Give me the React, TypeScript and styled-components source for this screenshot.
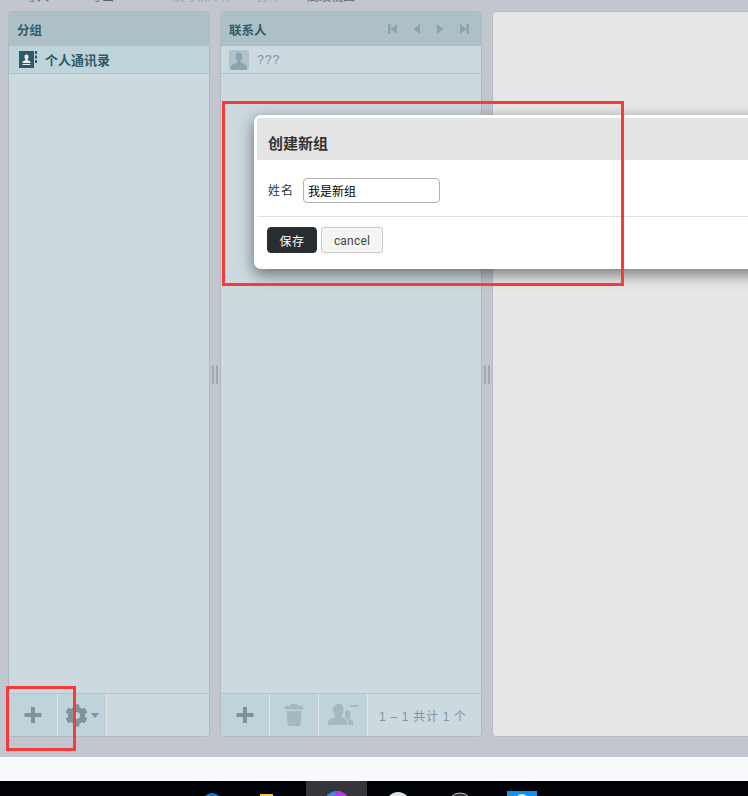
import { FC, ReactNode } from "react";
import styled, { createGlobalStyle } from "styled-components";
import { FaCog } from "react-icons/fa";

const cjk = `"Liberation Sans", "Noto Sans CJK SC", sans-serif`;

const GlobalStyle = createGlobalStyle`
    html, body {
        margin: 0;
        padding: 0;
        height: 796px;
        overflow: hidden;
        font-family: ${cjk};
    }
`;

const Page = styled.div`
    position: relative;
    width: 748px;
    height: 796px;
    overflow: hidden;
    display: flex;
    flex-direction: column;
`;

const Workspace = styled.div`
    height: 757px;
    background: #c2c6ce;
    padding-left: 8px;
    box-sizing: border-box;
    overflow: hidden;
`;

const TopMenu = styled.div`
    height: 11px;
    overflow: hidden;
    display: flex;
    align-items: flex-end;
    line-height: 16px;
`;

const TopMenuItem = styled.span<{ $left: number; $muted?: boolean }>`
    margin-left: ${(p) => p.$left}px;
    padding-bottom: 6px;
    white-space: nowrap;
    font-size: 12px;
    color: ${(p) => (p.$muted ? "#9a9fa6" : "#5f656b")};
`;

const Panels = styled.div`
    display: flex;
    height: 726px;
    width: 800px;
`;

const Panel = styled.section<{ $width: number }>`
    width: ${(p) => p.$width}px;
    box-sizing: border-box;
    display: flex;
    flex-direction: column;
    background: #ccd9df;
    border: 1px solid #b0b9be;
    border-radius: 4px;
    overflow: hidden;
`;

const PanelHeader = styled.header`
    height: 34px;
    flex: none;
    box-sizing: border-box;
    padding: 0 8px;
    display: flex;
    align-items: center;
    justify-content: space-between;
    background: #adc0c6;
`;

const PanelTitle = styled.h2`
    margin: 0;
    font-size: 12.5px;
    font-weight: 700;
    color: #2f5b68;
`;

const Pager = styled.div`
    display: flex;
    gap: 15px;
    padding-right: 4px;
`;

const ListRow = styled.div<{ $active?: boolean }>`
    height: 28px;
    flex: none;
    box-sizing: border-box;
    display: flex;
    align-items: center;
    padding-left: ${(p) => (p.$active ? 10 : 8)}px;
    background: ${(p) => (p.$active ? "#bfd3da" : "#ccd9df")};
    border-bottom: 1px solid #b2c1c6;
`;

const GroupName = styled.span`
    margin-left: 8px;
    font-size: 13px;
    font-weight: 700;
    color: #2f5b68;
`;

const ContactName = styled.span`
    margin-left: 8px;
    font-size: 12.5px;
    letter-spacing: 0.8px;
    color: #7f929e;
`;

const PanelBody = styled.div`
    flex: 1;
`;

const PanelFooter = styled.footer`
    height: 42px;
    flex: none;
    display: flex;
    align-items: stretch;
    border-top: 1px solid #b5c3c8;
`;

const ToolButton = styled.div`
    width: 49px;
    box-sizing: border-box;
    display: flex;
    align-items: center;
    justify-content: center;
    gap: 3px;
    background: #bfd3da;
    border-right: 1px solid #e1e7e9;
`;

const PageCount = styled.span`
    align-self: center;
    margin-left: 11px;
    font-size: 12px;
    letter-spacing: 0.7px;
    color: #7f959e;
    white-space: nowrap;
`;

const Splitter = styled.div`
    width: 10px;
    flex: none;
    display: flex;
    align-items: center;
    justify-content: center;
    gap: 2px;
`;

const Grip = styled.i`
    width: 2px;
    height: 19px;
    background: #a3a9ae;
`;

const BlankPanel = styled.section`
    width: 300px;
    box-sizing: border-box;
    background: #e6e6e6;
    border: 1px solid #b9bdc2;
    border-radius: 4px;
`;

const Strip = styled.div`
    height: 24px;
    background: #f8f9fa;
`;

const Taskbar = styled.div`
    height: 15px;
    background: #010208;
    display: flex;
    align-items: flex-start;
    overflow: hidden;
    padding-left: 200px;
`;

const TaskTile = styled.div<{ $width: number; $left: number; $active?: boolean }>`
    width: ${(p) => p.$width}px;
    margin-left: ${(p) => p.$left}px;
    height: 15px;
    flex: none;
    display: flex;
    justify-content: center;
    background: ${(p) => (p.$active ? "#35363b" : "transparent")};
`;

const Dialog = styled.div`
    position: absolute;
    left: 254px;
    top: 115px;
    width: 640px;
    box-sizing: border-box;
    background: #fff;
    border: 3px solid #fff;
    border-radius: 7px;
    box-shadow: 0 5px 15px rgba(0, 0, 0, 0.5);
`;

const DialogHead = styled.div`
    height: 42px;
    box-sizing: border-box;
    padding: 15px 0 0 11px;
    background: #e4e4e4;
    font-size: 15px;
    line-height: 21px;
    font-weight: 700;
    color: #333;
`;

const DialogBody = styled.div`
    height: 57px;
    box-sizing: border-box;
    padding: 18px 0 0 11px;
    display: flex;
    align-items: flex-start;
    border-bottom: 1px solid #e0e0e0;
`;

const FieldLabel = styled.label`
    width: 35px;
    flex: none;
    font-size: 12px;
    line-height: 26px;
    letter-spacing: 1px;
    color: #333;
`;

const NameInput = styled.input`
    width: 137px;
    height: 25px;
    box-sizing: border-box;
    padding: 0 4px;
    border: 1px solid #b0b0b0;
    border-radius: 4px;
    background: #fff;
    font: 12px ${cjk};
    color: #000;
`;

const DialogFoot = styled.div`
    height: 49px;
    box-sizing: border-box;
    padding: 10px 0 0 10px;
    display: flex;
    align-items: flex-start;
    gap: 4px;
`;

const PrimaryButton = styled.button`
    width: 50px;
    height: 26px;
    padding: 0;
    border: 1px solid #292b2f;
    border-radius: 4px;
    background: #2a2d32;
    color: #fff;
    font: 12px ${cjk};
    letter-spacing: 0.5px;
`;

const PlainButton = styled.button`
    width: 62px;
    height: 26px;
    padding: 1px 0 0;
    border: 1px solid #ccc;
    border-radius: 3px;
    background: #f5f5f5;
    color: #444;
    font: 12px Roboto, "Liberation Sans", sans-serif;
    letter-spacing: 0.2px;
`;

const Annotation = styled.div<{ $x: number; $y: number; $w: number; $h: number }>`
    position: absolute;
    left: ${(p) => p.$x}px;
    top: ${(p) => p.$y}px;
    width: ${(p) => p.$w}px;
    height: ${(p) => p.$h}px;
    box-sizing: border-box;
    border: 3px solid #f83a3a;
    pointer-events: none;
`;

const PlusIcon: FC = () => (
    <svg width="18" height="18" viewBox="0 0 18 18">
        <path d="M7 1h4v6h6.500v4H11v6H7v-6H.5V7H7z" fill="#7b949e" />
    </svg>
);

const GearIcon = styled(FaCog)`
    width: 23px;
    height: 23px;
    color: #7b949e;
`;

const Caret: FC = () => (
    <svg width="8" height="5" viewBox="0 0 8 5">
        <path d="M0 0h8L4 5z" fill="#7b949e" />
    </svg>
);

const TrashIcon: FC = () => (
    <svg width="18" height="22" viewBox="0 0 18 22">
        <path
            d="M6 0h6l1 2h4a1 1 0 0 1 1 1v2.500H0V3a1 1 0 0 1 1-1h4zM1.500 7h15l-1 14a1 1 0 0 1-1 1H3.500a1 1 0 0 1-1-1z"
            fill="#a5b9bf"
        />
    </svg>
);

const PeopleIcon: FC = () => (
    <svg width="30" height="22" viewBox="0 0 30 22">
        <path
            d="M11 0c3 0 4.500 2 4.500 5s-1 6-2.500 7.500c3 1.500 5 2.500 6 4.500v4H0v-3c1-2.500 5-4 7.500-5.500C6 11 5 8 5 5c0-3 3-5 6-5z"
            fill="#a5b9bf"
        />
        <path
            d="M19 6c2 0 3.500 1.500 3.500 4s-.5 3.500-1.500 4.500c1.500 1 4 1.500 4 3.500v3h-5v-4c-.5-1.500-2-3-3-3.500.5-1 0-3 0-4 0-2 .5-3.500 2-3.500z"
            fill="#a5b9bf"
        />
        <rect x="22" y="1" width="8" height="2" fill="#a5b9bf" />
    </svg>
);

const PagerIcon: FC<{ dir: "first" | "prev" | "next" | "last" }> = ({ dir }) => {
    const paths = {
        first: "M0 0h2.500v10H0zM9 0v10L2.500 5z",
        prev: "M8 0v10L1.500 5z",
        next: "M1 0v10l6.500-5z",
        last: "M0 0v10l6.500-5zM6.500 0H9v10H6.500z",
    };
    return (
        <svg width="9" height="10" viewBox="0 0 9 10">
            <path d={paths[dir]} fill="#8ca4ad" />
        </svg>
    );
};

const AddressBookIcon: FC = () => (
    <svg width="18" height="17" viewBox="0 0 18 17">
        <rect width="15" height="17" fill="#2f5b68" />
        <path d="M16 0h2v3h-2zM16 4.500h2v3h-2zM16 9h2v3h-2z" fill="#2f5b68" />
        <path
            d="M7.500 3.500c1.300 0 2 .9 2 2.200 0 1-.4 1.900-.9 2.500v1.100c1 .4 2.900.8 2.900 2V12h-8v-.7c0-1.200 1.900-1.600 2.900-2V8.200c-.5-.6-.9-1.500-.9-2.500 0-1.300.7-2.200 2-2.200zM3.500 13h8v1h-8z"
            fill="#e9f0f2"
        />
    </svg>
);

const AvatarIcon: FC = () => (
    <svg width="20" height="20" viewBox="0 0 20 20">
        <rect width="20" height="20" rx="2" fill="#afc3ca" />
        <path
            d="M10 2.500c2.200 0 3.300 1.600 3.300 3.800 0 1.800-.6 3.400-1.400 4.400v2c1.800.8 5.600 1.500 6.100 4.300V20H2v-3c.5-2.800 4.300-3.500 6.100-4.300v-2c-.8-1-1.400-2.600-1.400-4.400 0-2.200 1.100-3.800 3.300-3.800z"
            fill="#8aa5af"
        />
    </svg>
);

const TaskGlyph: FC<{ size: number; children: ReactNode }> = ({ size, children }) => (
    <svg width={size} height="15" viewBox={`0 0 ${size} 15`}>
        {children}
    </svg>
);

export default function App() {
    return (
        <Page>
            <GlobalStyle />
            <Workspace>
                <TopMenu>
                    <TopMenuItem $left={17}>导入</TopMenuItem>
                    <TopMenuItem $left={41}>导出</TopMenuItem>
                    <TopMenuItem $left={58} $muted>
                        撰写新邮件
                    </TopMenuItem>
                    <TopMenuItem $left={25} $muted>
                        打印
                    </TopMenuItem>
                    <TopMenuItem $left={26}>高级视图</TopMenuItem>
                </TopMenu>
                <Panels>
                    <Panel $width={202}>
                        <PanelHeader>
                            <PanelTitle>分组</PanelTitle>
                        </PanelHeader>
                        <ListRow $active>
                            <AddressBookIcon />
                            <GroupName>个人通讯录</GroupName>
                        </ListRow>
                        <PanelBody />
                        <PanelFooter>
                            <ToolButton>
                                <PlusIcon />
                            </ToolButton>
                            <ToolButton>
                                <GearIcon />
                                <Caret />
                            </ToolButton>
                        </PanelFooter>
                    </Panel>
                    <Splitter>
                        <Grip />
                        <Grip />
                    </Splitter>
                    <Panel $width={262}>
                        <PanelHeader>
                            <PanelTitle>联系人</PanelTitle>
                            <Pager>
                                <PagerIcon dir="first" />
                                <PagerIcon dir="prev" />
                                <PagerIcon dir="next" />
                                <PagerIcon dir="last" />
                            </Pager>
                        </PanelHeader>
                        <ListRow>
                            <AvatarIcon />
                            <ContactName>???</ContactName>
                        </ListRow>
                        <PanelBody />
                        <PanelFooter>
                            <ToolButton>
                                <PlusIcon />
                            </ToolButton>
                            <ToolButton>
                                <TrashIcon />
                            </ToolButton>
                            <ToolButton>
                                <PeopleIcon />
                            </ToolButton>
                            <PageCount>1 – 1 共计 1 个</PageCount>
                        </PanelFooter>
                    </Panel>
                    <Splitter>
                        <Grip />
                        <Grip />
                    </Splitter>
                    <BlankPanel />
                </Panels>
            </Workspace>
            <Strip />
            <Taskbar>
                <TaskTile $width={24} $left={0}>
                    <TaskGlyph size={24}>
                        <circle cx="12" cy="22" r="10" fill="#1177d4" />
                    </TaskGlyph>
                </TaskTile>
                <TaskTile $width={16} $left={35}>
                    <TaskGlyph size={16}>
                        <rect x="1" y="13" width="13" height="2" fill="#f5c842" />
                    </TaskGlyph>
                </TaskTile>
                <TaskTile $width={61} $left={31} $active>
                    <TaskGlyph size={26}>
                        <circle cx="13" cy="23" r="13" fill="#3f8ae8" />
                        <path d="M13 23 11 10a13 13 0 0 1 14 10z" fill="#b63ae8" />
                    </TaskGlyph>
                </TaskTile>
                <TaskTile $width={26} $left={18}>
                    <TaskGlyph size={26}>
                        <circle cx="13" cy="23" r="12" fill="#dfe4ea" />
                        <circle cx="13" cy="24" r="8" fill="#8a95a8" />
                    </TaskGlyph>
                </TaskTile>
                <TaskTile $width={26} $left={36}>
                    <TaskGlyph size={26}>
                        <circle cx="13" cy="24" r="12" fill="#33343a" stroke="#c9ccd2" />
                    </TaskGlyph>
                </TaskTile>
                <TaskTile $width={30} $left={34}>
                    <TaskGlyph size={30}>
                        <rect y="10" width="30" height="5" fill="#1190ee" />
                        <circle cx="15" cy="20" r="7" fill="#d8eefc" />
                    </TaskGlyph>
                </TaskTile>
            </Taskbar>
            <Dialog>
                <DialogHead>创建新组</DialogHead>
                <DialogBody>
                    <FieldLabel>姓名</FieldLabel>
                    <NameInput defaultValue="我是新组" />
                </DialogBody>
                <DialogFoot>
                    <PrimaryButton>保存</PrimaryButton>
                    <PlainButton>cancel</PlainButton>
                </DialogFoot>
            </Dialog>
            <Annotation $x={222} $y={101} $w={402} $h={185} />
            <Annotation $x={6} $y={686} $w={70} $h={65} />
        </Page>
    );
}
